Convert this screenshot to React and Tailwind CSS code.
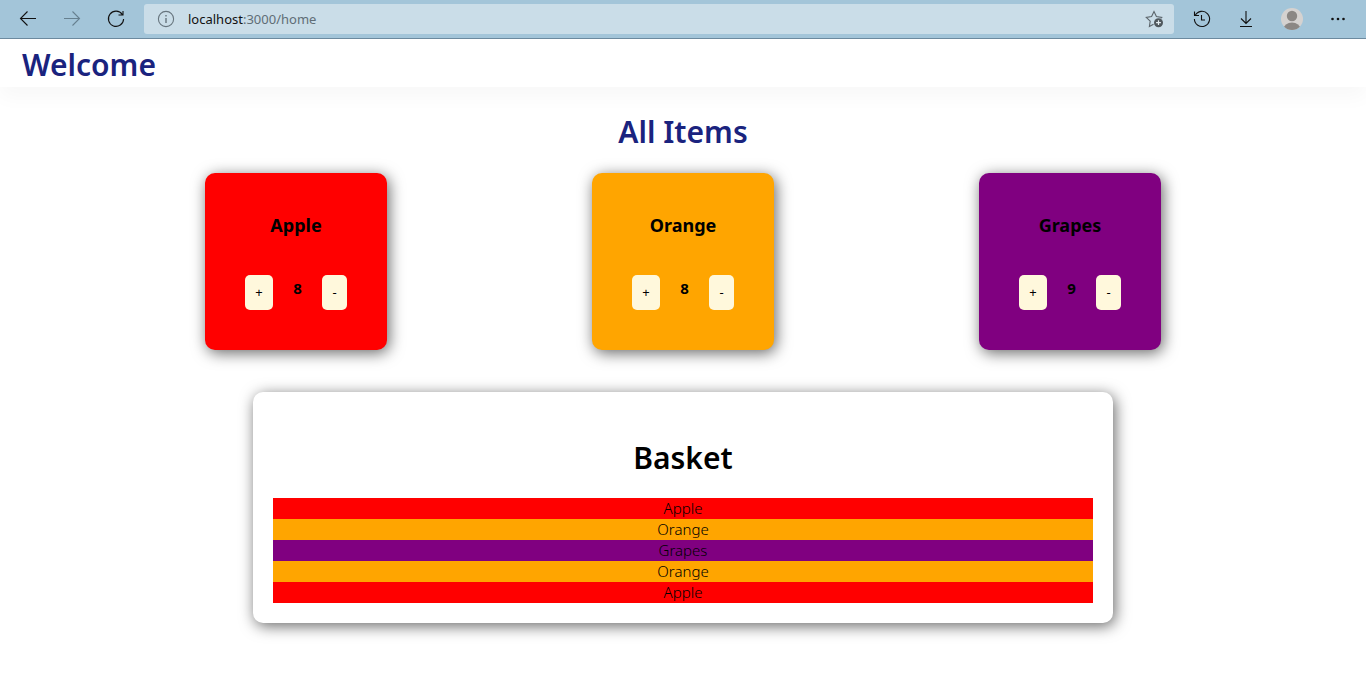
import React, { useState } from "react";

const FRUITS = {
  Apple: "bg-[#ff0000]",
  Orange: "bg-[#ffa500]",
  Grapes: "bg-[#800080]",
};

const SHADOW = "shadow-[2px_3px_15px_rgba(0,0,0,0.6)]";

function Icon({ size = 20, children, className = "" }) {
  return (
    <svg
      width={size}
      height={size}
      viewBox={`0 0 ${size} ${size}`}
      fill="none"
      stroke="currentColor"
      strokeWidth="1.1"
      className={className}
      aria-hidden="true"
    >
      {children}
    </svg>
  );
}

function BarButton({ label, className = "", children }) {
  return (
    <button type="button" aria-label={label} className={`flex shrink-0 items-center justify-center ${className}`}>
      {children}
    </button>
  );
}

function BrowserBar() {
  return (
    <div className="flex h-[39px] items-center border-b border-[#6d8ba0] bg-[#a3c5d9] pr-[18px] pl-[18px] text-[#111]">
      <div className="flex gap-6 pr-[18px]">
        <BarButton label="Back">
          <Icon>
            <path d="M18 9.500H2.500M9.500 2.500l-7 7 7 7" />
          </Icon>
        </BarButton>
        <BarButton label="Forward" className="text-[#66808f]">
          <Icon>
            <path d="M2 9.500h15.500M10.500 2.500l7 7-7 7" />
          </Icon>
        </BarButton>
        <BarButton label="Refresh">
          <Icon>
            <path d="M16.300 5.500A7.600 7.600 0 1 0 17.600 10M17 2v4h-4.500" />
          </Icon>
        </BarButton>
      </div>
      <div className="flex h-[30px] min-w-0 flex-1 items-center rounded-[3px] bg-[#cadde8] pr-[10px] pl-3">
        <Icon className="shrink-0 text-[#67757e]">
          <circle cx="10" cy="10" r="7.600" />
          <path d="M10 9v5M10 6v1.500" strokeWidth="1.400" />
        </Icon>
        <p className="ml-3 min-w-0 flex-1 font-['Noto_Sans','Open_Sans',sans-serif] text-[13px] leading-5 text-[#5f6d76]">
          <span className="text-[#111]">localhost</span>:3000/home
        </p>
        <BarButton label="Add to favorites" className="text-[#5c656b]">
          <Icon>
            <path d="M9.500 15.200L5.400 17.500l.8-5.400L2.300 8.400l5.300-.8L10 2.500l2.400 5.100 5.300.8-1 1" />
            <circle cx="14.500" cy="13.700" r="4.500" fill="#50585d" stroke="none" />
            <path d="M14.500 11.300v4.800M12.100 13.700h4.800" stroke="#e4edf2" strokeWidth="1.200" />
          </Icon>
        </BarButton>
      </div>
      <div className="flex items-center gap-6 pl-[18px]">
        <BarButton label="History">
          <Icon>
            <path d="M3.200 6.500A7.600 7.600 0 1 1 2.400 10M2.500 2.500v4H7M9.500 6v5h3.500" />
          </Icon>
        </BarButton>
        <BarButton label="Downloads">
          <Icon>
            <path d="M10 2v12.500M5 9.500l5 5 5-5M4 17.500h12" />
          </Icon>
        </BarButton>
        <BarButton label="Profile">
          <svg width="24" height="24" viewBox="0 0 24 24" aria-hidden="true">
            <defs>
              <clipPath id="avatar">
                <circle cx="12" cy="12" r="11" />
              </clipPath>
            </defs>
            <circle cx="12" cy="12" r="11" fill="#d5d2d0" />
            <circle cx="12" cy="9" r="5.200" fill="#8b8784" />
            <g clipPath="url(#avatar)">
              <ellipse cx="12" cy="22" rx="8.500" ry="6.500" fill="#8b8784" />
            </g>
          </svg>
        </BarButton>
        <BarButton label="Settings and more">
          <Icon>
            <g fill="currentColor" stroke="none">
              <circle cx="4.500" cy="10" r="1.300" />
              <circle cx="10" cy="10" r="1.300" />
              <circle cx="15.500" cy="10" r="1.300" />
            </g>
          </Icon>
        </BarButton>
      </div>
    </div>
  );
}

function ItemCard({ name, count, onAdd, onRemove }) {
  const button = "h-[35px] rounded-[5px] bg-[#fff8dc] px-[10px] text-[13px]";
  return (
    <article className={`rounded-[10px] p-10 ${FRUITS[name]} ${SHADOW}`}>
      <h3 className="text-center text-lg leading-6 font-bold">{name}</h3>
      <div className="mt-[38px] flex w-[102px] items-start justify-between">
        <button type="button" aria-label={`Add ${name}`} onClick={onAdd} className={`w-7 ${button}`}>
          +
        </button>
        <span className="pt-1 text-[15px] leading-[18px] font-bold">{count}</span>
        <button type="button" aria-label={`Remove ${name}`} onClick={onRemove} className={`w-[25px] ${button}`}>
          -
        </button>
      </div>
    </article>
  );
}

export default function App() {
  const [stock, setStock] = useState({ Apple: 8, Orange: 8, Grapes: 9 });
  const [basket, setBasket] = useState(["Apple", "Orange", "Grapes", "Orange", "Apple"]);

  const add = (name) => {
    if (stock[name] === 0) return;
    setStock({ ...stock, [name]: stock[name] - 1 });
    setBasket([...basket, name]);
  };

  const remove = (name) => {
    const index = basket.lastIndexOf(name);
    if (index < 0) return;
    setStock({ ...stock, [name]: stock[name] + 1 });
    setBasket(basket.filter((_, i) => i !== index));
  };

  return (
    <div className="min-h-screen bg-white font-['Noto_Sans','Open_Sans',sans-serif] text-black">
      <BrowserBar />
      <header className="flex h-12 items-center px-[22px] pt-1 shadow-[0_10px_20px_rgba(0,0,0,0.03)]">
        <h1 className="text-[30px] leading-10 font-semibold text-[#1a237e]">Welcome</h1>
      </header>
      <main>
        <h2 className="pt-6 text-center text-[30px] leading-[42px] font-semibold text-[#1a237e]">All Items</h2>
        <section className="mt-5 flex justify-evenly">
          {Object.keys(FRUITS).map((name) => (
            <ItemCard
              key={name}
              name={name}
              count={stock[name]}
              onAdd={() => add(name)}
              onRemove={() => remove(name)}
            />
          ))}
        </section>
        <section className={`mx-auto mt-[42px] w-[63%] rounded-[10px] bg-white px-5 pt-[46px] pb-5 ${SHADOW}`}>
          <h2 className="text-center text-[30px] leading-10 font-semibold">Basket</h2>
          <ul className="mt-5 text-center text-[15px] leading-[21px] font-light">
            {basket.map((name, i) => (
              <li key={i} className={FRUITS[name]}>
                {name}
              </li>
            ))}
          </ul>
        </section>
      </main>
    </div>
  );
}
